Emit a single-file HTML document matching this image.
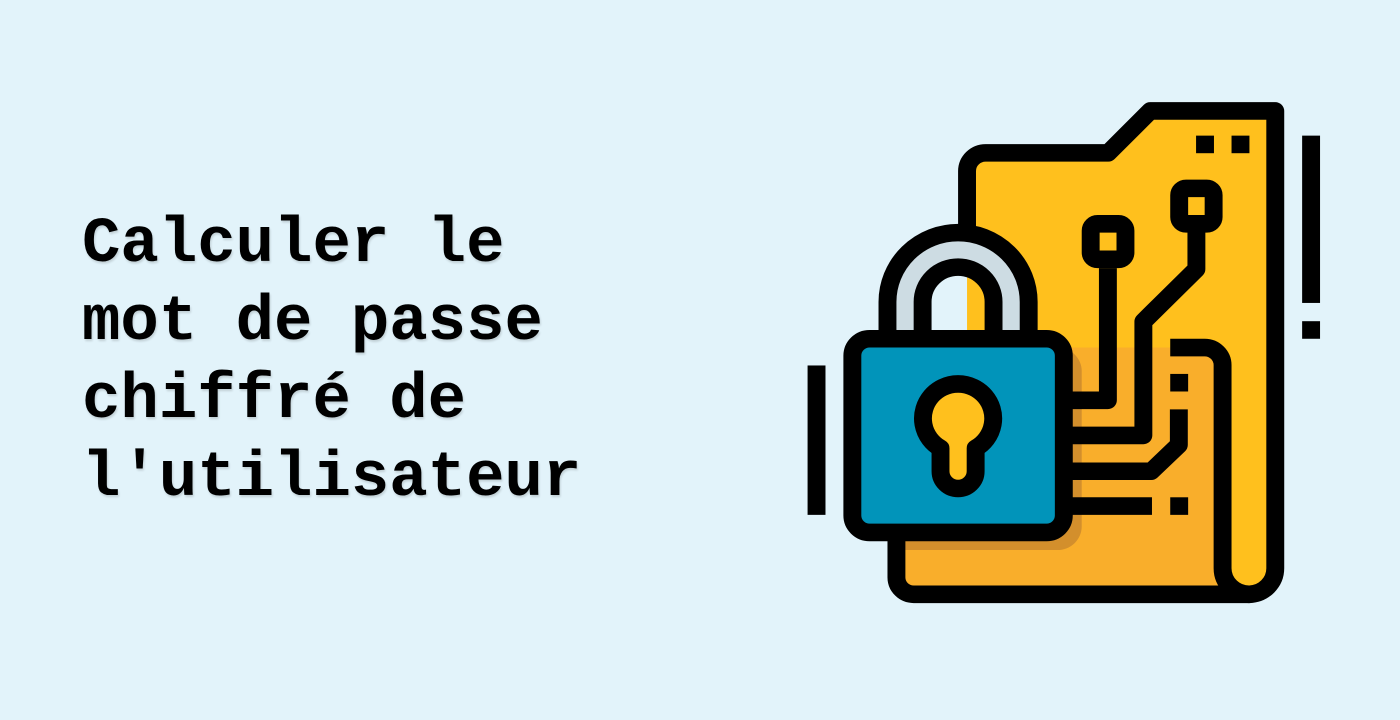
<!DOCTYPE html>
<html><head><meta charset="utf-8"><style>
html,body{margin:0;padding:0;}
body{width:1400px;height:720px;background:#E2F3FA;position:relative;overflow:hidden;}
.t{position:absolute;left:82px;top:206px;font-family:"Liberation Mono",monospace;font-weight:bold;font-size:64px;line-height:78px;color:#000;white-space:pre;text-shadow:1px 2px 2px rgba(0,0,0,0.15);}
svg{position:absolute;left:0;top:0;}
</style></head><body>
<div class="t">Calculer le
mot de passe
chiffré de
l'utilisateur</div>
<svg width="1400" height="720" viewBox="0 0 1400 720">
<defs><clipPath id="oc"><path d="M280,762 H1175 A52,52 0 0 1 1227,814 V1415 A78,78 0 0 0 1250,1492 H330 A50,50 0 0 1 280,1442 Z"/></clipPath></defs>
<g transform="translate(800,90) scale(0.3444,0.338)">
 <path d="M485,420 V240 A54,54 0 0 1 539,186 H895 L1017,62 H1380 V1415 A77,77 0 0 1 1305,1492 H485 Z" fill="#FFC01D"/>
 <path d="M280,762 H1175 A52,52 0 0 1 1227,814 V1415 A78,78 0 0 0 1250,1492 H330 A50,50 0 0 1 280,1442 Z" fill="#F9AE2B"/>
 <rect x="204" y="762" width="614" height="599" rx="70" fill="#D38F2C" clip-path="url(#oc)"/>
 <g fill="none" stroke="#000" stroke-width="52" stroke-linejoin="round">
  <path d="M485,420 V240 A54,54 0 0 1 539,186 H895 L1017,62 H1380 V1415 A77,77 0 0 1 1305,1492 H330 A50,50 0 0 1 280,1442 V1320"/>
  <path d="M1075,762 H1175 A52,52 0 0 1 1227,814 V1415 A77,77 0 0 0 1305,1492"/>
  <rect x="844" y="396" width="101" height="105" rx="20"/>
  <rect x="1101" y="291" width="100" height="105" rx="20"/>
  <path d="M894,527 V918 H780"/>
  <path d="M1151,420 V530 L997,685 V1022 H780"/>
  <path d="M1100,945 V1050 L1020,1128 H780"/>
  <path d="M780,1231 H1022" stroke-linejoin="miter"/>
 </g>
 <g fill="#000">
  <rect x="1075" y="840" width="52" height="52"/>
  <rect x="1075" y="1205" width="52" height="52"/>
  <rect x="1150" y="135" width="52" height="52"/>
  <rect x="1253" y="135" width="52" height="52"/>
  <rect x="22" y="815" width="52" height="442"/>
  <rect x="1458" y="135" width="52" height="495"/>
  <rect x="1458" y="684" width="52" height="52"/>
 </g>
 <path d="M305,730 V627 A154,154 0 0 1 613,627 V730" fill="none" stroke="#000" stroke-width="154"/>
 <path d="M305,730 V627 A154,154 0 0 1 613,627 V730" fill="none" stroke="#CDDCE3" stroke-width="50"/>
 <rect x="152" y="736" width="614" height="573" rx="50" fill="#0194BA" stroke="#000" stroke-width="52"/>
 <path d="M408,1060 A102,102 0 1 1 510,1060 V1128 A51,51 0 0 1 408,1128 Z" fill="#FFC01D" stroke="#000" stroke-width="52" stroke-linejoin="round"/>
</g>
</svg>
</body></html>
